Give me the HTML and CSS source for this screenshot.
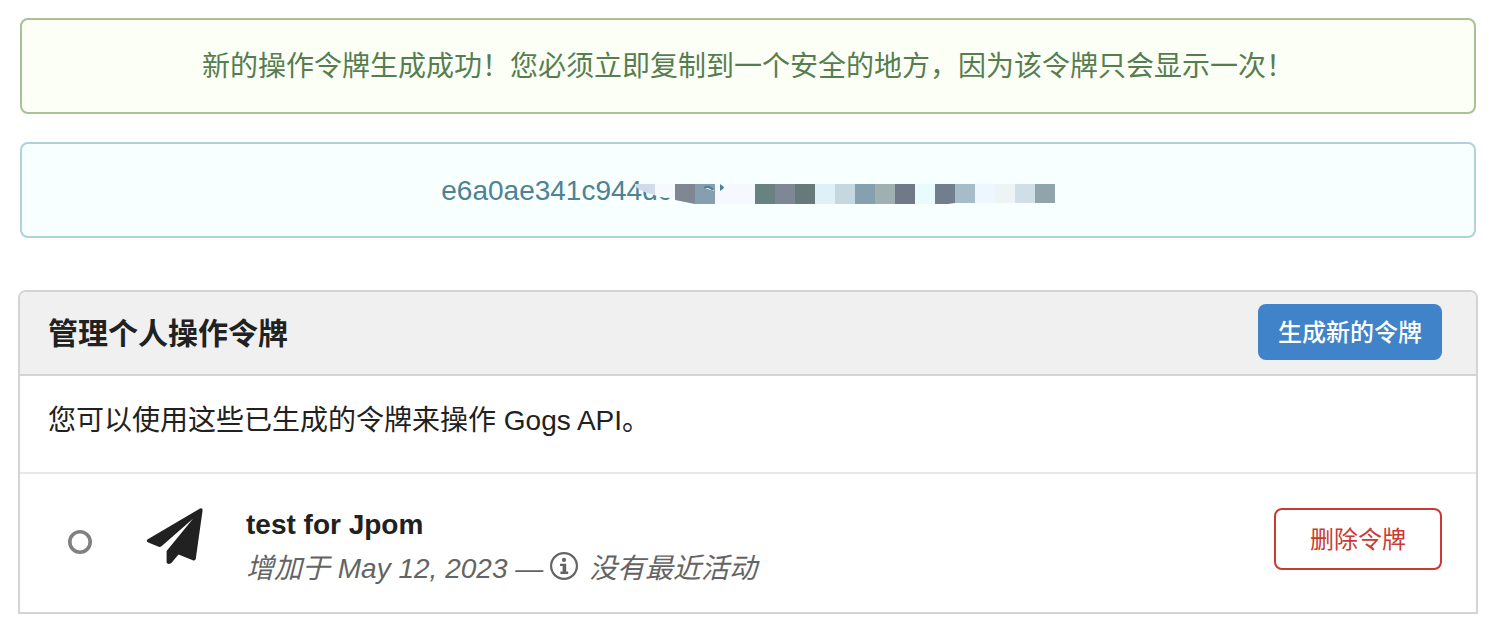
FILE: index.html
```html
<!DOCTYPE html>
<html lang="zh-CN">
<head>
<meta charset="utf-8">
<title>管理个人操作令牌</title>
<link rel="stylesheet" href="styles.css">
</head>
<body>
<main class="page">
  <div class="message message-success"><p>新的操作令牌生成成功！您必须立即复制到一个安全的地方，因为该令牌只会显示一次！</p></div>
  <div class="message message-info">
    <p class="token">e6a0ae341c944dc<svg class="token-mask" width="420" height="32" viewBox="0 -2 420 32" aria-hidden="true">
      <path fill="#f8ffff" d="M8 -2H420V26H60L40 22L36 18L25 17L13 13L8 8Z"/>
      <path fill="#d1dbe9" d="M0 4H20V15L12 13L5 10L0 6Z"/>
      <path fill="#f6faff" d="M20 4H40V18L20 15Z"/>
      <path fill="#7f8892" d="M40 4H60V24L40 20Z"/>
      <path fill="#869fae" d="M60 4H80V24H60Z"/>
      <path fill="#f6f8ff" d="M80 4H120V24H80Z"/>
      <path fill="#f8ffff" d="M69 8Q73 5 78 9L79 11L73 9Z"/>
      <path fill="none" stroke="#4e8294" stroke-width="2" d="M69 8Q74 5 78 10"/>
      <path fill="#4e8294" d="M85 4L89 7L88 9L85 11Z"/>
      <path fill="#678280" d="M120 4H140V24H120Z"/>
      <path fill="#7d8894" d="M140 4H160V24H140Z"/>
      <path fill="#667a7b" d="M160 4H180V24H160Z"/>
      <path fill="#def1f8" d="M180 4H200V24H180Z"/>
      <path fill="#c5d8df" d="M200 4H220V24H200Z"/>
      <path fill="#86a0b0" d="M220 4H240V24H220Z"/>
      <path fill="#9eb0b2" d="M240 4H260V24H240Z"/>
      <path fill="#6f7988" d="M260 4H280V24H260Z"/>
      <path fill="#e8fcff" d="M280 4H300V24H280Z"/>
      <path fill="#717e8d" d="M300 4H320V23L313 24H300Z"/>
      <path fill="#a6bdc9" d="M320 4H340V23H320Z"/>
      <path fill="#ecf7ff" d="M340 4H360V23H340Z"/>
      <path fill="#edf4f6" d="M360 4H380V23H360Z"/>
      <path fill="#d0dee7" d="M380 4H400V23H380Z"/>
      <path fill="#8fa5ab" d="M400 4H420V23H400Z"/>
    </svg></p>
  </div>

  <section class="panel">
    <header class="panel-header">
      <h1>管理个人操作令牌</h1>
      <button class="button button-primary" type="button">生成新的令牌</button>
    </header>
    <p class="panel-intro">您可以使用这些已生成的令牌来操作 Gogs API。</p>
    <div class="token-row">
      <svg class="status-icon" width="24" height="24" viewBox="0 0 24 24" aria-hidden="true"><circle cx="12" cy="12" r="10.2" fill="none" stroke="#808080" stroke-width="3.6"/></svg>
      <svg class="send-icon" width="58" height="58" viewBox="0 0 58 58" aria-hidden="true"><path fill="#212121" d="M54 .5Q56.6-.6 56.6 2.2L49.8 50.7Q49.3 53 46.8 52.2L32.5 46.5L25.6 54.8Q21.6 57.3 20.6 54.5V43L47.2 10.6L15.8 38Q14 39.4 12 38.6L1.8 34.2Q-.2 32.7 1.8 31.3Z"/></svg>
      <div class="token-text">
        <strong class="token-name">test for Jpom</strong>
        <i class="token-meta">增加于 May 12, 2023 — <svg class="info-icon" width="28" height="28" viewBox="0 0 28 28" aria-hidden="true"><circle cx="14" cy="14" r="12.9" fill="none" stroke="#646464" stroke-width="2.2"/><circle cx="14" cy="7.9" r="2.1" fill="#646464"/><path fill="#646464" d="M10 11.7H16.2V19.6H18.2V22H10.4V19.6H12.6V14.1H10Z"/></svg>没有最近活动</i>
      </div>
      <button class="button button-danger" type="button">删除令牌</button>
    </div>
  </section>
</main>
</body>
</html>
```
FILE: styles.css
```css
* { box-sizing: border-box; }

body {
  margin: 0;
  background: #fff;
  color: #212121;
  font-family: "Liberation Sans", "Noto Sans CJK SC", sans-serif;
  font-size: 28px;
  line-height: 40px;
}

p, h1 { margin: 0; }

.page { padding: 18px; }

.message {
  display: flex;
  justify-content: center;
  margin: 0 2px 28px;
  padding: 27px 26px 25px;
  border: 2px solid;
  border-radius: 8px;
}

.message-success { color: #567d4f; background: #fcfff5; border-color: #a9c194; }
.message-info { color: #4e8294; background: #f8ffff; border-color: #afd2db; }

.token { display: flex; align-items: center; }
.token-mask { flex: none; margin: 6px 0 0 -37px; }

.panel {
  margin-top: 52px;
  border: 2px solid #d4d4d5;
  border-radius: 8px 8px 0 0;
  overflow: hidden;
}

.panel-header {
  display: flex;
  align-items: center;
  justify-content: space-between;
  padding: 12px 34px 14px 28px;
  background: #f0f0f0;
  border-bottom: 2px solid #d4d4d5;
}

.panel-header h1 { padding-top: 4px; font-size: 30px; line-height: 40px; }

.button {
  font-family: inherit;
  font-size: 24px;
  line-height: 24px;
  border-radius: 8px;
  cursor: pointer;
}

.button-primary { padding: 17px 20px 15px; border: 0; background: #4183c9; color: #fff; font-weight: 500; }
.button-danger { margin-left: auto; padding: 18px 34px 16px; border: 2px solid #c93a32; background: #fff; color: #c93a32; }

.panel-intro { padding: 25px 28px 31px; border-bottom: 2px solid #e8e8e8; }

.token-row {
  display: flex;
  align-items: flex-start;
  padding: 34px 34px 23px 48px;
}

.status-icon { flex: none; margin-top: 22px; }
.send-icon { flex: none; margin-left: 54px; }

.token-text { display: flex; flex-direction: column; margin-left: 42px; gap: 7px; }
.token-name { line-height: 34px; }
.token-meta { display: block; color: #646464; line-height: 40px; }
.info-icon { margin: 0 11px 0 -1px; vertical-align: -2px; }
```
